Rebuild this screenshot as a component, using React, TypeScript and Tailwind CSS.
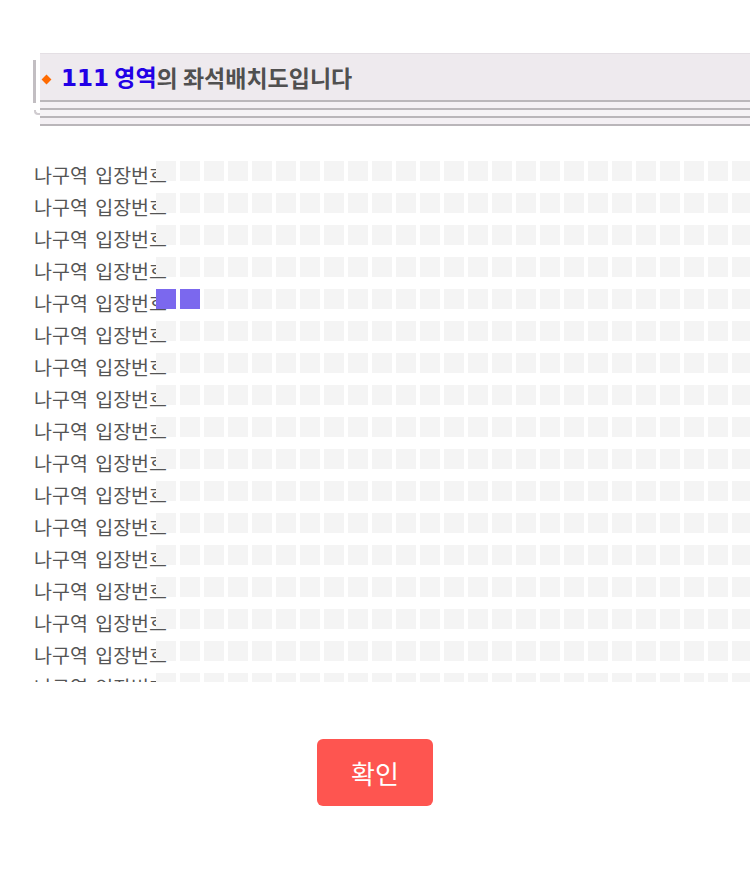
import React from "react";

const ROWS = 17;
const COLS = 28;

// selected seats: [row, col]
const picked = new Set(["4-0", "4-1"]);

function Seat({ on }: { on: boolean }) {
  return (
    <div
      className={
        "w-5 h-5 shrink-0 " + (on ? "bg-[#7b68ee]" : "bg-[#f4f4f4]")
      }
    />
  );
}

function SeatRow({ r }: { r: number }) {
  return (
    <div className="relative h-8 flex">
      <span className="absolute left-0 top-[2px] leading-8 text-[19.5px] [word-spacing:3px] text-[#555] whitespace-nowrap">
        나구역 입장번호
      </span>
      <div className="relative ml-[122px] mt-1 flex gap-1">
        {Array.from({ length: COLS }).map((_, c) => (
          <Seat key={c} on={picked.has(`${r}-${c}`)} />
        ))}
      </div>
    </div>
  );
}

export default function App() {
  return (
    <div
      className="w-[750px] h-[887px] bg-white overflow-hidden"
      style={{ fontFamily: '"Noto Sans CJK KR", "Noto Sans", sans-serif' }}
    >
      {/* zone title bar */}
      <div className="relative mt-[53px] pl-[33px]">
        <div className="flex h-[47px] items-start">
          <div className="w-[3px] h-[43px] mt-[7px] shrink-0 bg-[#c2bec2]" />
          <div className="flex-1 ml-[4px] h-[47px] bg-[#eeeaee] border-t border-[#e4dfe4] flex items-center">
            <span className="w-[7px] h-[7px] ml-[3px] mr-[11px] mt-[4px] bg-[#ff6a00] rotate-45" />
            <span className="text-[23px] font-bold text-[#2200e6]">
              <span style={{ fontFamily: '"DejaVu Sans", sans-serif' }}>111</span> 영역
            </span>
            <span className="text-[23px] font-bold text-[#505050]">의 좌석배치도입니다</span>
          </div>
        </div>
        <div className="relative ml-[7px]">
          <div className="h-[2px] bg-[#bab6ba]" />
          <div className="h-[6px] bg-[#f4f0f4]" />
          <div className="h-[2px] bg-[#bab6ba]" />
          <div className="h-[6px] bg-[#f6f3f6]" />
          <div className="h-[2px] bg-[#bab6ba]" />
          <div className="h-[6px] bg-[#f4f0f4]" />
          <div className="h-[2px] bg-[#bab6ba]" />
          <div className="absolute -left-[6px] top-[10px] w-[6px] h-[5px] border-l-2 border-b-2 border-[#d0ccd0] rounded-bl-[4px]" />
        </div>
      </div>

      {/* seat map */}
      <div className="mt-[31px] pl-[34px] h-[525px] overflow-hidden">
        {Array.from({ length: ROWS }).map((_, r) => (
          <SeatRow key={r} r={r} />
        ))}
      </div>

      <div className="flex justify-center mt-[57px]">
        <button className="w-[116px] h-[67px] rounded-[6px] bg-[#fe5550] text-white text-[26px]">
          확인
        </button>
      </div>
    </div>
  );
}
